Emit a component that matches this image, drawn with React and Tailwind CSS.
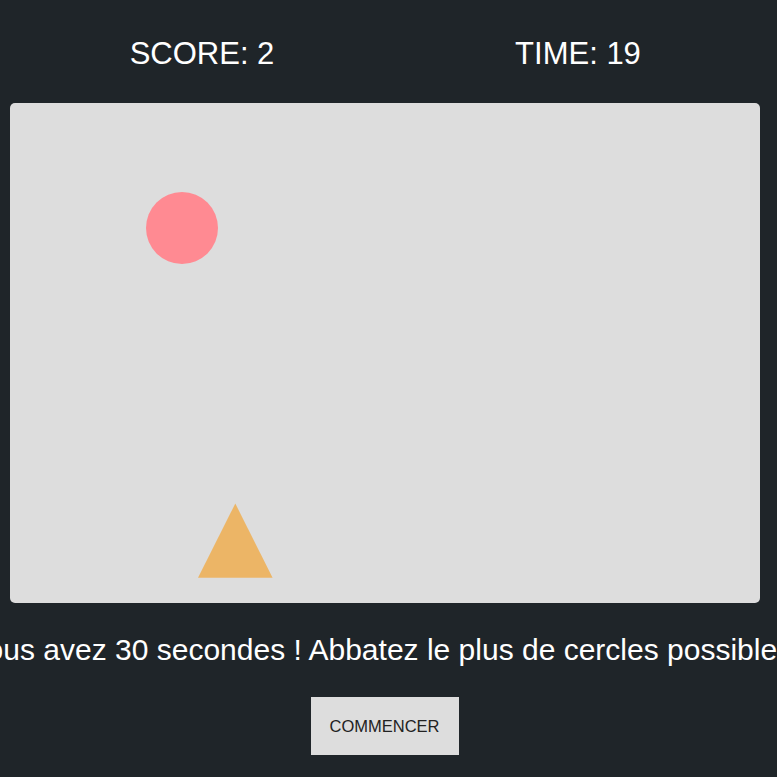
export default function App() {
  return (
    <div
      className="min-h-screen overflow-hidden bg-[#1f2529] text-white"
      style={{ fontFamily: '"Liberation Sans", Arial, sans-serif' }}
    >
      {/* score / temps */}
      <div className="flex pt-[38px] pl-[14px]">
        <div className="w-[376px] text-center text-[31px] leading-none">SCORE: 2</div>
        <div className="w-[376px] text-center text-[31px] leading-none">TIME: 19</div>
      </div>

      {/* zone de jeu */}
      <div className="relative mt-[34px] ml-[10px] h-[500px] w-[750px] rounded-[5px] bg-[#dddddd]">
        <div className="absolute left-[136px] top-[89px] h-[72px] w-[72px] rounded-full bg-[#ff8a92]" />
        <svg className="absolute left-[188px] top-[400px]" width="75" height="75" viewBox="0 0 75 75">
          <polygon points="37.3,0.5 74.6,74.8 0,74.8" fill="#ecb566" />
        </svg>
      </div>

      <div className="mt-[32px] flex justify-center">
        <p className="shrink-0 whitespace-nowrap text-[30px] leading-none">
          Vous avez 30 secondes ! Abbatez le plus de cercles possibles !
        </p>
      </div>

      <div className="mt-[32px] flex justify-center">
        <button className="mr-[8px] flex h-[58px] w-[148px] items-center justify-center bg-[#dddddd] text-[16.5px] text-[#222222]">
          COMMENCER
        </button>
      </div>
    </div>
  )
}
